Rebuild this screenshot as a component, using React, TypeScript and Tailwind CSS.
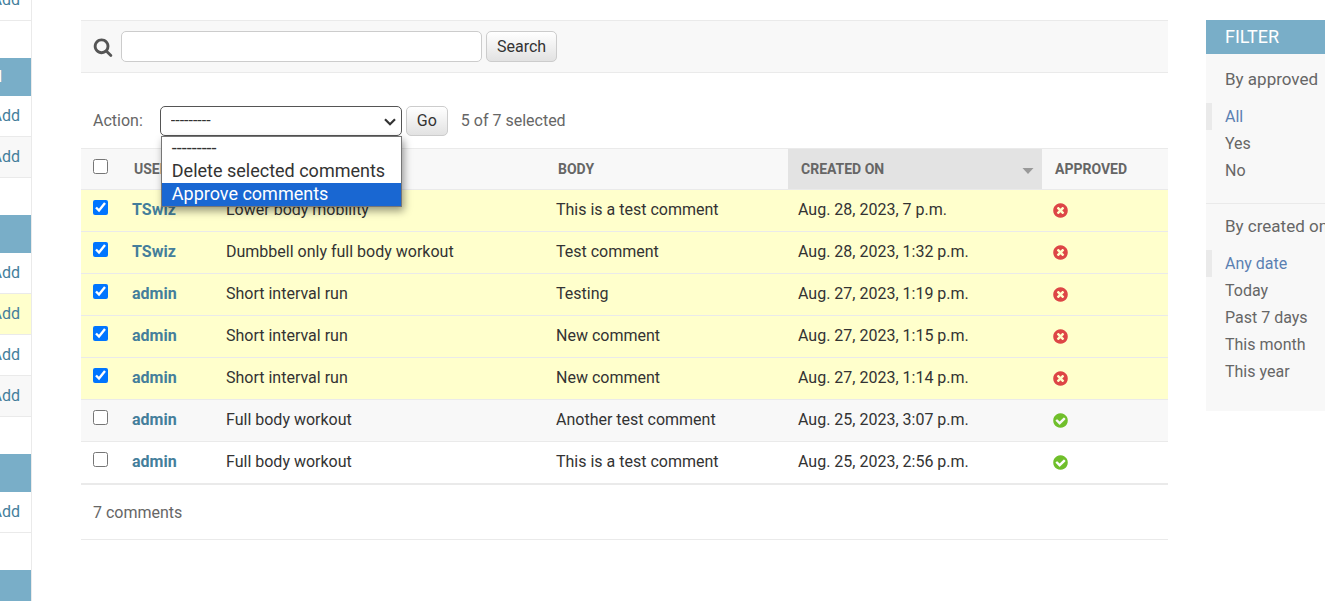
import { useState } from "react";

type Comment = {
  user: string;
  item: string;
  body: string;
  created: string;
  approved: boolean;
};

const comments: Comment[] = [
  { user: "TSwiz", item: "Lower body mobility", body: "This is a test comment", created: "Aug. 28, 2023, 7 p.m.", approved: false },
  { user: "TSwiz", item: "Dumbbell only full body workout", body: "Test comment", created: "Aug. 28, 2023, 1:32 p.m.", approved: false },
  { user: "admin", item: "Short interval run", body: "Testing", created: "Aug. 27, 2023, 1:19 p.m.", approved: false },
  { user: "admin", item: "Short interval run", body: "New comment", created: "Aug. 27, 2023, 1:15 p.m.", approved: false },
  { user: "admin", item: "Short interval run", body: "New comment", created: "Aug. 27, 2023, 1:14 p.m.", approved: false },
  { user: "admin", item: "Full body workout", body: "Another test comment", created: "Aug. 25, 2023, 3:07 p.m.", approved: true },
  { user: "admin", item: "Full body workout", body: "This is a test comment", created: "Aug. 25, 2023, 2:56 p.m.", approved: true },
];

const DISC =
  "q0 209-103 385.5t-279.5 279.5-385.5 103-385.5-103-279.5-279.5-103-385.5 103-385.5 279.5-279.5 385.5-103 385.5 103 279.5 279.5 103 385.5z";

function StatusIcon({ ok }: { ok: boolean }) {
  return (
    <svg role="img" aria-label={ok ? "True" : "False"} viewBox="0 0 1792 1792" className="mt-0.5 size-[17px]">
      {ok ? (
        <path
          fill="#70bf2b"
          d={"M1412 734q0-28-18-46l-91-90q-19-19-45-19t-45 19l-408 407-226-226q-19-19-45-19t-45 19l-91 90q-18 18-18 46 0 27 18 45l362 362q19 19 45 19 27 0 46-19l543-543q18-18 18-45zm252 162" + DISC}
        />
      ) : (
        <path
          fill="#dd4646"
          d={"M1277 1122q0-26-19-45l-181-181 181-181q19-19 19-45 0-27-19-46l-90-90q-19-19-46-19-26 0-45 19l-181 181-181-181q-19-19-45-19-27 0-46 19l-90 90q-19 19-19 46 0 26 19 45l181 181-181 181q-19 19-19 45 0 27 19 46l90 90q19 19 46 19 26 0 45-19l181-181 181 181q19 19 45 19 27 0 46-19l90-90q19-19 19-46zm387-226" + DISC}
        />
      )}
    </svg>
  );
}

function SearchIcon() {
  return (
    <svg viewBox="0 0 1792 1792" className="size-5 shrink-0" aria-hidden="true">
      <path
        fill="#555"
        d="M1216 832q0-185-131.5-316.5t-316.5-131.5-316.5 131.5-131.5 316.5 131.5 316.5 316.5 131.5 316.5-131.5 131.5-316.5zm512 832q0 52-38 90t-90 38q-54 0-90-38l-343-342q-179 124-399 124-143 0-273.5-55.5t-225-150-150-225-55.5-273.5 55.5-273.5 150-225 225-150 273.5-55.5 273.5 55.5 225 150 150 225 55.5 273.5q0 220-124 399l343 343q37 37 37 90z"
      />
    </svg>
  );
}

function AddRow({ className = "bg-white" }: { className?: string }) {
  return (
    <div className={`flex h-[41px] items-center justify-end border-b border-[#eaeaea] pr-[11px] ${className}`}>
      <a href="#add" className="text-[#447e9b]">Add</a>
    </div>
  );
}

function AppHeading({ title = "" }: { title?: string }) {
  return (
    <div className="mt-[37px] flex h-[38px] items-center justify-end bg-[#79aec8] pr-[29px] text-base font-medium whitespace-nowrap text-white uppercase">
      {title}
    </div>
  );
}

function FilterGroup({ title, options }: { title: string; options: string[] }) {
  return (
    <section>
      <h3 className="pl-[19px] text-[17px] leading-[25px]">{title}</h3>
      <ul className="mt-[11px]">
        {options.map((o, i) => (
          <li key={o} className={`flex h-[27px] items-center border-l-[6px] pl-[13px] ${i === 0 ? "border-[#eaeaea]" : "border-transparent"}`}>
            <a href="#filter" className={i === 0 ? "text-[#5b80b2]" : "text-[#666]"}>{o}</a>
          </li>
        ))}
      </ul>
    </section>
  );
}

const buttonClass =
  "cursor-pointer rounded-[5px] border border-[#ccc] bg-linear-to-b from-white to-[#e2e2e2] px-[10px] text-[#333]";

export default function App() {
  const [selected, setSelected] = useState(comments.map((_, i) => i < 5));
  const [action, setAction] = useState("");
  const count = selected.filter(Boolean).length;
  const actions = [
    { value: "", label: "---------" },
    { value: "delete", label: "Delete selected comments" },
    { value: "approve", label: "Approve comments" },
  ];

  return (
    <div className="flex min-h-screen overflow-hidden bg-white font-['Roboto','Liberation_Sans',sans-serif] text-base leading-5 text-[#666]">
      <nav aria-label="Models" className="h-screen w-8 shrink-0 overflow-hidden border-r border-[#eaeaea]">
        <div className="-mt-5">
          <AddRow />
          <AppHeading title="Authorization" />
          <AddRow />
          <AddRow className="bg-[#f8f8f8]" />
          <AppHeading />
          <AddRow />
          <AddRow className="bg-[#ffffcc]" />
          <AddRow />
          <AddRow className="bg-[#f8f8f8]" />
          <AppHeading />
          <AddRow />
          <AppHeading />
        </div>
      </nav>

      <main className="ml-[49px] min-w-0 flex-1 pt-5">
        <form onSubmit={(e) => e.preventDefault()} className="flex h-[53px] items-center border-y border-[#eaeaea] bg-[#f8f8f8] pl-3">
          <label htmlFor="searchbar" aria-label="Search comments"><SearchIcon /></label>
          <input id="searchbar" type="text" className="ml-2 h-[31px] w-[361px] rounded-[5px] border border-[#ccc] bg-white px-2 text-[#333] outline-none" />
          <button type="submit" className={`ml-1 h-[31px] ${buttonClass}`}>Search</button>
        </form>

        <div className="mt-[33px] flex h-[30px] items-center pl-3">
          <label htmlFor="action">Action:</label>
          <div className="relative ml-[17px] w-[242px]">
            <select
              id="action"
              value={action}
              onChange={(e) => setAction(e.target.value)}
              className="h-[30px] w-full appearance-none rounded-[5px] border border-[#555] bg-white pl-[10px] text-[#333] outline-none"
            >
              {actions.map((a) => (
                <option key={a.value} value={a.value}>{a.label}</option>
              ))}
            </select>
            <svg viewBox="0 0 12 8" className="pointer-events-none absolute top-3 right-[6px] h-2 w-3" aria-hidden="true">
              <path d="M1 1.2 6 6.2 11 1.2" fill="none" stroke="#333" strokeWidth="2.2" />
            </svg>
            <ul role="listbox" aria-label="Actions" className="absolute top-full right-0 left-px z-10 border border-[#767676] bg-white text-lg leading-[21px] text-[#333] shadow-[2px_4px_8px_rgba(0,0,0,0.4)]">
              {actions.map((a) => (
                <li
                  key={a.value}
                  role="option"
                  aria-selected={a.value === "approve"}
                  className={`pb-0.5 pl-[10px] whitespace-nowrap ${a.value === "approve" ? "bg-[#1967d2] text-white" : ""}`}
                >
                  {a.label}
                </li>
              ))}
            </ul>
          </div>
          <button type="button" className={`ml-1 h-[30px] ${buttonClass}`}>Go</button>
          <span className="ml-[13px]">{count} of {comments.length} selected</span>
        </div>

        <table className="mt-3 w-full table-fixed border-collapse text-left">
          <colgroup>
            <col className="w-[41px]" />
            <col className="w-[94px]" />
            <col className="w-[330px]" />
            <col />
            <col className="w-[254px]" />
            <col className="w-[126px]" />
          </colgroup>
          <thead>
            <tr className="h-[41px] border-y border-[#eaeaea] bg-[#f8f8f8] text-sm">
              <th className="pt-[10px] pl-3 align-top">
                <input
                  type="checkbox"
                  aria-label="Select all comments"
                  checked={count === comments.length}
                  onChange={(e) => setSelected(comments.map(() => e.target.checked))}
                  className="block size-[15px]"
                />
              </th>
              <th className="px-3 font-bold">USER</th>
              <th className="px-3 font-bold">WORKOUT</th>
              <th className="px-3 font-bold">BODY</th>
              <th className="bg-[#e3e3e3] pr-2 pl-[13px] font-bold">
                <div className="flex items-center justify-between">
                  CREATED ON
                  <svg viewBox="0 0 12 6" className="mt-1 h-[6px] w-3" aria-hidden="true">
                    <path d="M0.500 0h11L6 6z" fill="#999" />
                  </svg>
                </div>
              </th>
              <th className="px-[13px] font-bold">APPROVED</th>
            </tr>
          </thead>
          <tbody className="border-b-2 border-[#eaeaea] text-[#333]">
            {comments.map((c, i) => (
              <tr
                key={i}
                className={`h-[42px] border-b border-[#eaeaea] align-top ${selected[i] ? "bg-[#ffffcc]" : i % 2 ? "bg-[#f8f8f8]" : "bg-white"}`}
              >
                <td className="pt-[10px] pl-3">
                  <input
                    type="checkbox"
                    aria-label={`Select comment ${i + 1}`}
                    checked={selected[i]}
                    onChange={() => setSelected(selected.map((s, j) => (j === i ? !s : s)))}
                    className="block size-[15px]"
                  />
                </td>
                <th scope="row" className="px-[10px] pt-[10px] font-bold">
                  <a href="#comment" className="text-[#447e9b]">{c.user}</a>
                </th>
                <td className="px-[10px] pt-[10px] whitespace-nowrap">{c.item}</td>
                <td className="px-[10px] pt-[10px]">{c.body}</td>
                <td className="px-[10px] pt-[10px] whitespace-nowrap">{c.created}</td>
                <td className="px-[10px] pt-[10px]"><StatusIcon ok={c.approved} /></td>
              </tr>
            ))}
          </tbody>
        </table>
        <p className="border-b border-[#eaeaea] pt-[18px] pb-4 pl-3">{comments.length} comments</p>
      </main>

      <aside className="mt-5 ml-[38px] w-[119px] shrink-0 self-start overflow-hidden bg-[#f8f8f8] pb-[26px] whitespace-nowrap">
        <h2 className="flex h-[34px] items-center bg-[#79aec8] pl-[19px] text-lg text-white">FILTER</h2>
        <div className="pt-[13px] pb-[19px]">
          <FilterGroup title="By approved" options={["All", "Yes", "No"]} />
        </div>
        <div className="border-t border-[#eaeaea] pt-[10px]">
          <FilterGroup title="By created on" options={["Any date", "Today", "Past 7 days", "This month", "This year"]} />
        </div>
      </aside>
    </div>
  );
}
